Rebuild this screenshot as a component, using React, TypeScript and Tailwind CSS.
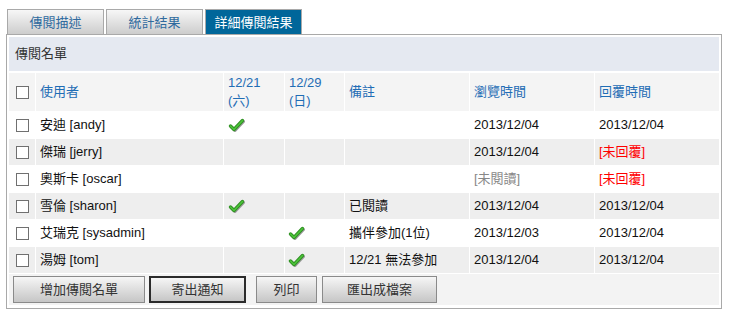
import React from 'react'

const FONT = { fontFamily: '"Liberation Sans", Arial, "Noto Sans CJK TC", sans-serif' }

const TABS = [
  { label: '傳閱描述', active: false },
  { label: '統計結果', active: false },
  { label: '詳細傳閱結果', active: true },
]

type Row = {
  name: string
  d1: boolean
  d2: boolean
  note: string
  viewed: string | null
  replied: string | null
}

const ROWS: Row[] = [
  { name: '安迪 [andy]', d1: true, d2: false, note: '', viewed: '2013/12/04', replied: '2013/12/04' },
  { name: '傑瑞 [jerry]', d1: false, d2: false, note: '', viewed: '2013/12/04', replied: null },
  { name: '奧斯卡 [oscar]', d1: false, d2: false, note: '', viewed: null, replied: null },
  { name: '雪倫 [sharon]', d1: true, d2: false, note: '已閱讀', viewed: '2013/12/04', replied: '2013/12/04' },
  { name: '艾瑞克 [sysadmin]', d1: false, d2: true, note: '攜伴參加(1位)', viewed: '2013/12/03', replied: '2013/12/04' },
  { name: '湯姆 [tom]', d1: false, d2: true, note: '12/21 無法參加', viewed: '2013/12/04', replied: '2013/12/04' },
]

function Check() {
  return (
    <svg width="17" height="14" viewBox="0 0 17 14" className="block">
      <path d="M2.5 8 L6 11.5 L14.5 2.5" fill="none" stroke="#9a9a9a" strokeWidth="3" strokeLinecap="round" strokeLinejoin="round" transform="translate(1 1)" />
      <path d="M2.5 8 L6 11.5 L14.5 2.5" fill="none" stroke="#2f8f22" strokeWidth="3.4" strokeLinecap="round" strokeLinejoin="round" />
      <path d="M2.5 8 L6 11.5 L14.5 2.5" fill="none" stroke="#4cc43a" strokeWidth="1.6" strokeLinecap="round" strokeLinejoin="round" />
    </svg>
  )
}

function Box() {
  return <span className="mx-auto block h-[13px] w-[13px] border border-[#707070] bg-white" />
}

export default function App() {
  return (
    <div className="h-[314px] w-[729px] overflow-hidden bg-white text-[13px] text-[#111]" style={FONT}>
      <div className="ml-[7px] mt-[9px] flex gap-[2px]">
        {TABS.map(({ label, active }) => (
          <div
            key={label}
            className={`flex h-[25px] w-[97px] items-center justify-center border border-b-0 border-[#a9a9a9] leading-none ${
              active
                ? 'bg-[#00669a] text-white'
                : 'bg-linear-to-b from-[#f7f7f7] to-[#cdcdcd] text-[#2f6a9e]'
            }`}
          >
            {label}
          </div>
        ))}
      </div>

      <div className="ml-[6px] h-[275px] w-[716px] border border-[#a9a9a9]">
        <div className="mx-[2px] mt-[2px] flex h-[34px] items-center bg-[#e5e9f1] pl-[6px] text-[#333]">
          傳閱名單
        </div>

        <table className="mx-px mt-px w-[712px] table-fixed border-separate border-spacing-[1px]">
          <colgroup>
            <col className="w-[26px]" />
            <col className="w-[187px]" />
            <col className="w-[60px]" />
            <col className="w-[59px]" />
            <col className="w-[124px]" />
            <col className="w-[124px]" />
            <col className="w-[124px]" />
          </colgroup>
          <thead>
            <tr className="h-[38px] bg-[#f4f4f4] text-left align-middle text-[#1f6db5]">
              <th className="p-0 font-normal"><Box /></th>
              <th className="pl-[4px] font-normal">使用者</th>
              <th className="pl-[4px] font-normal leading-[18px]">12/21<br />(六)</th>
              <th className="pl-[4px] font-normal leading-[18px]">12/29<br />(日)</th>
              <th className="pl-[4px] font-normal">備註</th>
              <th className="pl-[4px] font-normal">瀏覽時間</th>
              <th className="pl-[4px] font-normal">回覆時間</th>
            </tr>
          </thead>
          <tbody>
            {ROWS.map((r, i) => (
              <tr key={r.name} className={`h-[26px] align-middle ${i % 2 ? 'bg-[#eeeeee]' : 'bg-white'}`}>
                <td className="p-0"><Box /></td>
                <td className="pl-[4px]">{r.name}</td>
                <td className="pl-[4px]">{r.d1 && <Check />}</td>
                <td className="pl-[3px]">{r.d2 && <Check />}</td>
                <td className="pl-[4px]">{r.note}</td>
                <td className="pl-[4px]">
                  {r.viewed ?? <span className="text-[#888]">[未閱讀]</span>}
                </td>
                <td className="pl-[4px]">
                  {r.replied ?? <span className="text-[#f00]">[未回覆]</span>}
                </td>
              </tr>
            ))}
          </tbody>
        </table>

        <div className="mx-[2px] flex items-center bg-[#f3f3f3] pb-[2px] pl-[4px] pt-[2px] text-[#333]">
          <button className="h-[27px] w-[132px] border border-[#8a8a8a] bg-linear-to-b from-[#f6f6f6] to-[#c6c6c6]">
            增加傳閱名單
          </button>
          <button className="ml-[4px] h-[27px] w-[97px] border-2 border-[#2b2b2b] bg-linear-to-b from-[#f6f6f6] to-[#c6c6c6]">
            寄出通知
          </button>
          <button className="ml-[10px] h-[27px] w-[61px] border border-[#8a8a8a] bg-linear-to-b from-[#f6f6f6] to-[#c6c6c6]">
            列印
          </button>
          <button className="ml-[5px] h-[27px] w-[115px] border border-[#8a8a8a] bg-linear-to-b from-[#f6f6f6] to-[#c6c6c6]">
            匯出成檔案
          </button>
        </div>
      </div>
    </div>
  )
}
